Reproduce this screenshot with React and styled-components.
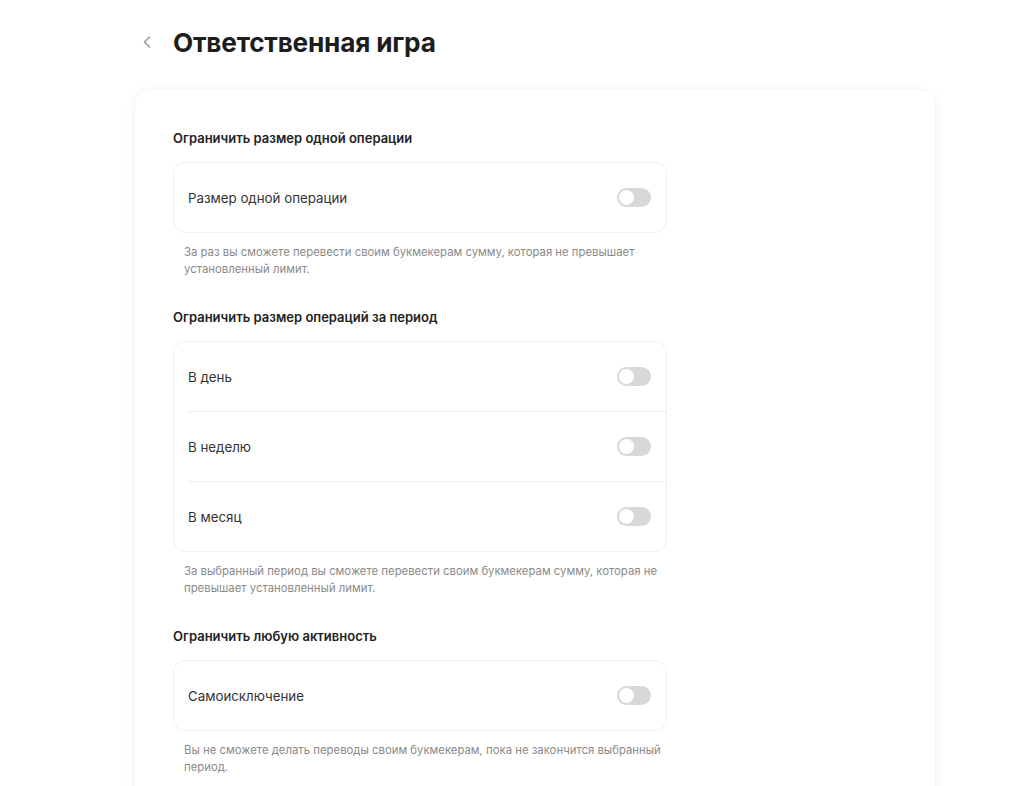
import React from 'react';
import styled, { createGlobalStyle } from 'styled-components';

const GlobalStyle = createGlobalStyle`
  body {
    margin: 0;
    background: #fff;
    font-family: Inter, "Noto Sans", sans-serif;
    color: #1f1f1f;
  }
  *, *::before, *::after {
    box-sizing: border-box;
  }
`;

const Page = styled.div`
  width: 802px;
  margin-left: 134px;
  padding-top: 26px;
`;

const Header = styled.div`
  display: flex;
  align-items: center;
  height: 32px;
  padding-left: 6px;
  gap: 19px;
`;

const Back = styled.button`
  border: 0;
  background: none;
  padding: 0;
  width: 14px;
  height: 14px;
  display: flex;
  align-items: center;
  justify-content: center;
  color: #9a9a9a;
  cursor: pointer;
`;

const Title = styled.h1`
  margin: 0;
  font-size: 26.2px;
  font-weight: 700;
  letter-spacing: -0.2px;
  color: #1d1d1d;
`;

const Card = styled.div`
  margin-top: 31px;
  background: #fff;
  border-radius: 16px;
  box-shadow: 0 2px 12px rgba(0, 0, 0, 0.05);
  border: 1px solid #f4f4f4;
  padding: 39px 38px 40px;
  min-height: 700px;
`;

const Section = styled.section`
  width: 494px;
  margin-bottom: 30px;
`;

const SectionTitle = styled.h3`
  margin: 0 0 15px;
  font-size: 13px;
  font-weight: 600;
  line-height: 18px;
  color: #222;
`;

const Box = styled.div`
  border: 1px solid #efefef;
  border-radius: 12px;
  overflow: hidden;
`;

const Row = styled.div`
  height: 69px;
  display: flex;
  align-items: center;
  justify-content: space-between;
  padding: 0 15px 0 14px;
  & + & {
    height: 70px;
    border-top: 1px solid #ececec;
    margin-left: 14px;
    padding-left: 0;
  }
`;

const Label = styled.span`
  font-size: 13.3px;
  color: #333;
`;

const Toggle = styled.button`
  border: 0;
  padding: 0;
  width: 34px;
  height: 19px;
  border-radius: 10px;
  background: ${({ $on }) => ($on ? '#2bb24c' : '#d8d8d8')};
  position: relative;
  cursor: pointer;
  &::after {
    content: '';
    position: absolute;
    top: 2px;
    left: ${({ $on }) => ($on ? '17px' : '2px')};
    width: 15px;
    height: 15px;
    border-radius: 50%;
    background: #fff;
  }
`;

const Hint = styled.p`
  margin: 11px 0 0;
  padding-left: 11px;
  font-size: 11.35px;
  line-height: 17px;
  color: #8a8a8a;
`;

const sections = [
  {
    title: 'Ограничить размер одной операции',
    rows: ['Размер одной операции'],
    hint: 'За раз вы сможете перевести своим букмекерам сумму, которая не превышает установленный лимит.',
  },
  {
    title: 'Ограничить размер операций за период',
    rows: ['В день', 'В неделю', 'В месяц'],
    hint: 'За выбранный период вы сможете перевести своим букмекерам сумму, которая не превышает установленный лимит.',
  },
  {
    title: 'Ограничить любую активность',
    rows: ['Самоисключение'],
    hint: 'Вы не сможете делать переводы своим букмекерам, пока не закончится выбранный период.',
  },
];

const App = () => {
  return (
    <>
      <GlobalStyle />
      <Page>
        <Header>
          <Back aria-label="Назад">
            <svg width="8" height="12" viewBox="0 0 8 12" fill="none">
              <path d="M6.5 1L1.5 6l5 5" stroke="currentColor" strokeWidth="1.6" strokeLinecap="round" strokeLinejoin="round" />
            </svg>
          </Back>
          <Title>Ответственная игра</Title>
        </Header>
        <Card>
          {sections.map((s) => (
            <Section key={s.title}>
              <SectionTitle>{s.title}</SectionTitle>
              <Box>
                {s.rows.map((r) => (
                  <Row key={r}>
                    <Label>{r}</Label>
                    <Toggle $on={false} />
                  </Row>
                ))}
              </Box>
              <Hint>{s.hint}</Hint>
            </Section>
          ))}
        </Card>
      </Page>
    </>
  );
};

export default App;
